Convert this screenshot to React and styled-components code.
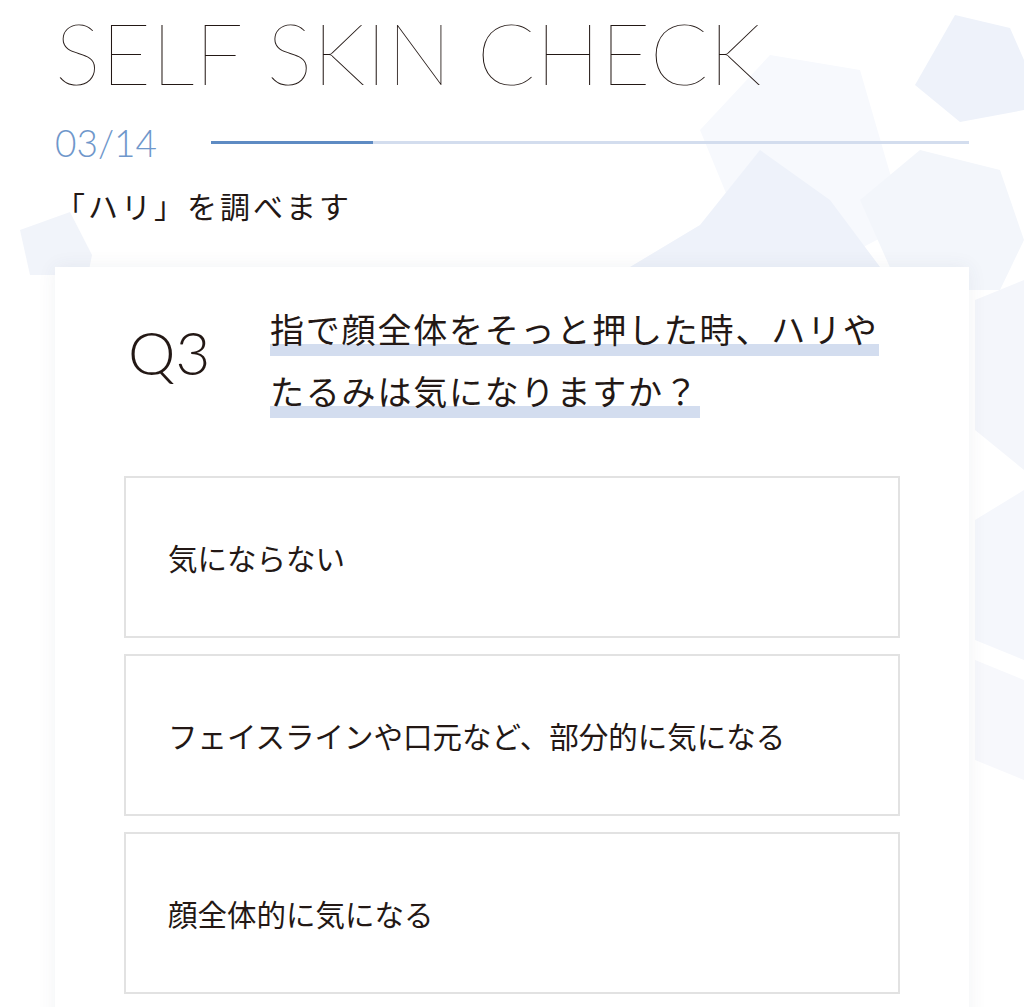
import styled, { createGlobalStyle } from "styled-components";

const GlobalStyle = createGlobalStyle`
    html, body {
        margin: 0;
        padding: 0;
        background: #ffffff;
    }
    body {
        font-family: "Noto Sans CJK JP", "Noto Sans", sans-serif;
        color: #231815;
    }
`

const Page = styled.div`
    position: relative;
    width: 1024px;
    min-height: 1007px;
    overflow: hidden;
    background: #ffffff;
`
const Backdrop = styled.svg`
    position: absolute;
    top: 0;
    left: 0;
    width: 1024px;
    height: 1007px;
    z-index: 0;
`
const Content = styled.div`
    position: relative;
    z-index: 1;
    padding: 0 55px;
`
const Title = styled.h1`
    margin: 0;
    padding-top: 0;
    font-family: "Lato", sans-serif;
    font-weight: 200;
    font-size: 86px;
    line-height: 104px;
    letter-spacing: 0.4px;
    color: #231815;
    white-space: nowrap;
`
const Progress = styled.div`
    display: flex;
    align-items: center;
    margin-top: 18px;
    height: 40px;
`
const Counter = styled.span`
    width: 156px;
    flex-shrink: 0;
    font-family: "Lato", sans-serif;
    font-weight: 300;
    font-size: 37px;
    color: #6f97cb;
`
const Track = styled.div`
    flex: 1;
    height: 3px;
    background: #d3ddee;
    display: flex;
`
const Fill = styled.div`
    height: 100%;
    background: #5e8bc3;
`
const Lead = styled.p`
    margin: 23px 0 0;
    font-size: 30px;
    line-height: 40px;
    letter-spacing: 3px;
    font-weight: 400;
`
const Card = styled.section`
    margin-top: 42px;
    background: #ffffff;
    box-shadow: 0 0 18px rgba(60, 70, 100, 0.07);
    padding: 31px 69px 40px;
`
const QuestionRow = styled.div`
    display: flex;
    padding-left: 4px;
`
const QNumber = styled.div`
    width: 142px;
    flex-shrink: 0;
    font-family: "Lato", sans-serif;
    font-weight: 300;
    font-size: 60px;
    line-height: 62px;
    padding-top: 23px;
    color: #231815;
`
const QText = styled.p`
    margin: 0;
    font-size: 34px;
    line-height: 62px;
    letter-spacing: 1.8px;
`
const Mark = styled.span`
    background: linear-gradient(transparent 76%, #d3ddef 76%);
    padding-bottom: 3px;
`
const Options = styled.div`
    display: flex;
    flex-direction: column;
    gap: 16px;
    margin-top: 54px;
`
const Option = styled.button`
    display: flex;
    align-items: center;
    height: 162px;
    padding: 0 0 0 42px;
    background: #ffffff;
    border: 2px solid #e2e2e2;
    font-family: "Noto Sans CJK JP", "Noto Sans", sans-serif;
    font-size: 29.5px;
    color: #231815;
    text-align: left;
    cursor: pointer;
`

const shapes = [
    { p: "915,85 955,15 1010,28 1024,60 1024,110 960,122", c: "#eef2fa" },
    { p: "700,130 770,55 860,70 905,225 820,270 735,215", c: "#f7f9fd" },
    { p: "630,267 700,225 760,150 830,200 880,267", c: "#eef2fa" },
    { p: "860,200 920,150 1000,170 1024,240 1000,290 900,290", c: "#f3f6fb" },
    { p: "20,230 70,212 92,255 88,275 30,275", c: "#f1f4fa" },
    { p: "975,300 1024,280 1024,470 975,430", c: "#f4f6fb" },
    { p: "975,520 1024,490 1024,660 975,640", c: "#f5f7fc" },
    { p: "975,660 1024,680 1024,780 975,760", c: "#f7f8fc" },
]

const questions = ["気にならない", "フェイスラインや口元など、部分的に気になる", "顔全体的に気になる"]

const App = () => {
    const step = 3
    const total = 14
    return (
        <Page>
            <GlobalStyle />
            <Backdrop viewBox="0 0 1024 1007">
                {shapes.map((s, i) => (
                    <polygon key={i} points={s.p} fill={s.c} />
                ))}
            </Backdrop>
            <Content>
                <Title>SELF SKIN CHECK</Title>
                <Progress>
                    <Counter>03/14</Counter>
                    <Track>
                        <Fill style={{ width: `${((step - 1) / (total - 1)) * 100 * 1.39}%` }} />
                    </Track>
                </Progress>
                <Lead>「ハリ」を調べます</Lead>
                <Card>
                    <QuestionRow>
                        <QNumber>Q3</QNumber>
                        <QText>
                            <Mark>指で顔全体をそっと押した時、ハリやたるみは気になりますか？</Mark>
                        </QText>
                    </QuestionRow>
                    <Options>
                        {questions.map((q) => (
                            <Option key={q}>{q}</Option>
                        ))}
                    </Options>
                </Card>
            </Content>
        </Page>
    )
}
export default App
